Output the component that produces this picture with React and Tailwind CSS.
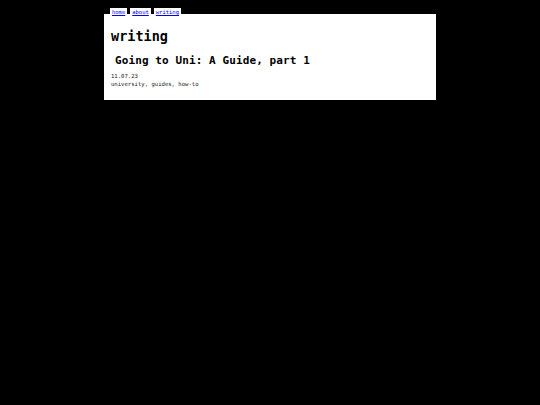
export default function App() {
  const links = ["home", "about", "writing"];
  return (
    <div className="min-h-screen bg-black pt-[8px] font-['DejaVu_Sans_Mono',monospace] text-black">
      <div className="mx-auto w-[332px]">
        <nav className="flex h-[6px] gap-[3px] pl-[6px]">
          {links.map((l) => (
            <a
              key={l}
              href="#"
              className="block h-[8px] bg-white px-[2px] text-[5.5px] leading-[9px] text-[#0000ee] underline"
            >
              {l}
            </a>
          ))}
        </nav>
        <main className="bg-white pb-[12px] pl-[7px] pt-[14px]">
          <h1 className="text-[13.5px] font-bold leading-[16px]">writing</h1>
          <article className="mt-[10px]">
            <h2 className="pl-[4px] text-[11px] font-bold leading-[14px] tracking-[0.1px]">
              Going to Uni: A Guide, part 1
            </h2>
            <p className="mt-[4px] text-[5.6px] leading-[8px] text-[#222]">11.07.23</p>
            <p className="text-[5.6px] leading-[8px] text-[#222]">university, guides, how-to</p>
          </article>
        </main>
      </div>
    </div>
  );
}
